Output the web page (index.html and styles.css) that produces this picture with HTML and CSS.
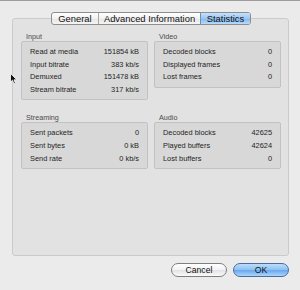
FILE: index.html
```html
<!DOCTYPE html>
<html>
<head>
<meta charset="utf-8">
<link rel="stylesheet" href="styles.css">
</head>
<body>
<div class="window">
  <div class="group">
    <div class="tabs">
      <span class="tab">General</span>
      <span class="tab">Advanced Information</span>
      <span class="tab active">Statistics</span>
    </div>
    <div class="grid">
      <section class="sec">
        <div class="title">Input</div>
        <div class="box">
          <div class="row"><span>Read at media</span><span>151854 kB</span></div>
          <div class="row"><span>Input bitrate</span><span>383 kb/s</span></div>
          <div class="row"><span>Demuxed</span><span>151478 kB</span></div>
          <div class="row"><span>Stream bitrate</span><span>317 kb/s</span></div>
        </div>
      </section>
      <section class="sec">
        <div class="title">Video</div>
        <div class="box">
          <div class="row"><span>Decoded blocks</span><span>0</span></div>
          <div class="row"><span>Displayed frames</span><span>0</span></div>
          <div class="row"><span>Lost frames</span><span>0</span></div>
        </div>
      </section>
      <section class="sec">
        <div class="title">Streaming</div>
        <div class="box">
          <div class="row"><span>Sent packets</span><span>0</span></div>
          <div class="row"><span>Sent bytes</span><span>0 kB</span></div>
          <div class="row"><span>Send rate</span><span>0 kb/s</span></div>
        </div>
      </section>
      <section class="sec">
        <div class="title">Audio</div>
        <div class="box">
          <div class="row"><span>Decoded blocks</span><span>42625</span></div>
          <div class="row"><span>Played buffers</span><span>42624</span></div>
          <div class="row"><span>Lost buffers</span><span>0</span></div>
        </div>
      </section>
    </div>
  </div>
  <div class="buttons">
    <span class="btn">Cancel</span>
    <span class="btn ok">OK</span>
  </div>
  <svg class="cursor" width="8" height="12" viewBox="0 0 8 12">
    <path d="M0.5 0.5 L0.5 9 L2.5 7.2 L4 10.8 L5.4 10.2 L4 6.8 L6.8 6.8 Z" fill="#111" stroke="#fff" stroke-width="0.8"/>
  </svg>
</div>
</body>
</html>
```
FILE: styles.css
```css
html, body {
  margin: 0;
  padding: 0;
}
body {
  width: 300px;
  height: 290px;
  background: #ebebeb;
  font-family: "Liberation Sans", Arial, sans-serif;
  overflow: hidden;
}
.window {
  position: relative;
  height: 289px;
  border-top: 1px solid #9c9c9c;
  padding: 17px 11px 0 12px;
  box-sizing: border-box;
}
.group {
  height: 238px;
  box-sizing: border-box;
  border: 1px solid #cbcbcb;
  border-radius: 3px;
  background: #e2e2e2;
  padding: 0 7px 0 8px;
}
.tabs {
  display: flex;
  justify-content: center;
  margin: -7px auto 0;
  width: 200px;
  height: 13px;
  box-sizing: border-box;
  border: 1px solid #8e8e8e;
  border-radius: 3px;
  background: linear-gradient(#ffffff, #f1f1f1 50%, #e6e6e6 51%, #f4f4f4);
  overflow: hidden;
}
.tab {
  font-size: 9.4px;
  line-height: 11px;
  color: #111;
  text-align: center;
  border-left: 1px solid #a6a6a6;
}
.tab:first-child {
  border-left: none;
  width: 46px;
}
.tab:nth-child(2) {
  width: 101px;
}
.tab.active {
  flex: 1;
  background: linear-gradient(#c7e0fa, #9ac6f3 50%, #82b6ee 51%, #b9dcfc);
  border-left-color: #6b8fbd;
}
.grid {
  display: grid;
  grid-template-columns: 127px 127px;
  column-gap: 6px;
  row-gap: 13px;
  margin-top: 7px;
}
.title {
  font-size: 7.2px;
  line-height: 9px;
  color: #4a4a4a;
  padding-left: 5px;
}
.box {
  border: 1px solid #c2c2c2;
  border-radius: 2px;
  background: #d8d8d8;
  padding: 4px 8px 3px 8px;
  min-height: 37px;
}
.row {
  display: flex;
  justify-content: space-between;
  font-size: 7.4px;
  line-height: 12.6px;
  color: #1e1e1e;
}
.buttons {
  display: flex;
  justify-content: flex-end;
  gap: 6px;
  margin-top: 7px;
}
.btn {
  width: 56px;
  height: 14px;
  box-sizing: border-box;
  border: 1px solid #7f7f7f;
  border-radius: 7px;
  background: linear-gradient(#ffffff, #f2f2f2 50%, #e3e3e3 51%, #fafafa);
  font-size: 8.6px;
  line-height: 12px;
  text-align: center;
  color: #111;
}
.btn.ok {
  border-color: #4a6d9e;
  background: linear-gradient(#bcdcfb, #8cc0f3 50%, #68a6ec 51%, #a9d6fd);
}
.cursor {
  position: absolute;
  left: 10px;
  top: 72px;
}
```
